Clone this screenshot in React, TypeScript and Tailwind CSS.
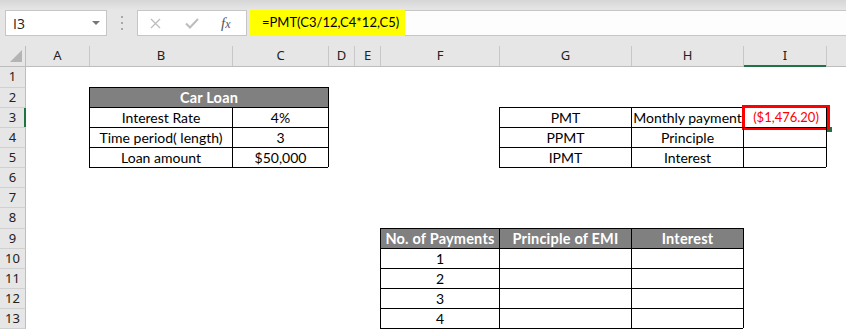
import React from "react";

type Spec = { text?: string; head?: boolean; red?: boolean; span?: number };

const COLS = [
  { k: "A", w: 63 },
  { k: "B", w: 143 },
  { k: "C", w: 96 },
  { k: "D", w: 26 },
  { k: "E", w: 26 },
  { k: "F", w: 119 },
  { k: "G", w: 132 },
  { k: "H", w: 112 },
  { k: "I", w: 83 },
  { k: "J", w: 20 },
];

// row number -> height (px, line included)
const ROWS: [number, number][] = [
  [1, 20], [2, 20], [3, 20], [4, 20], [5, 20], [6, 20], [7, 20],
  [8, 21], [9, 20], [10, 20], [11, 20], [12, 20], [13, 20], [14, 1],
];

// bordered ranges: rows [from, to], columns [from, to] by index
const BOXES = [
  { r: [2, 5], c: [1, 2] },
  { r: [3, 5], c: [6, 8] },
  { r: [9, 13], c: [5, 7] },
];

const CELLS: Record<string, Spec> = {
  B2: { text: "Car Loan", head: true, span: 2 },
  B3: { text: "Interest Rate" },
  C3: { text: "4%" },
  B4: { text: "Time period( length)" },
  C4: { text: "3" },
  B5: { text: "Loan amount" },
  C5: { text: "$50,000" },
  G3: { text: "PMT" },
  H3: { text: "Monthly payment" },
  I3: { text: "($1,476.20)", red: true },
  G4: { text: "PPMT" },
  H4: { text: "Principle" },
  G5: { text: "IPMT" },
  H5: { text: "Interest" },
  F9: { text: "No. of Payments", head: true },
  G9: { text: "Principle of EMI", head: true },
  H9: { text: "Interest", head: true },
  F10: { text: "1" },
  F11: { text: "2" },
  F12: { text: "3" },
  F13: { text: "4" },
};

function inBox(r: number, c: number) {
  return BOXES.some(b => r >= b.r[0] && r <= b.r[1] && c >= b.c[0] && c <= b.c[1]);
}

function FormulaIcons() {
  return (
    <div className="ml-[14px] flex h-[26px] w-[110px] items-center border border-[#c6c6c6] bg-white">
      <svg className="ml-[12px] h-[11px] w-[11px]" viewBox="0 0 11 11" fill="none" stroke="#bdbdbd" strokeWidth={1.3}>
        <path d="M1 1l9 9M10 1l-9 9" />
      </svg>
      <svg className="ml-[24px] h-[11px] w-[14px]" viewBox="0 0 14 11" fill="none" stroke="#bdbdbd" strokeWidth={2}>
        <path d="M1 5.5l4 4L13 1" />
      </svg>
      <span className="ml-[22px] font-['Liberation_Serif',serif] text-[15px] italic leading-none text-[#555]">
        f<span className="text-[12px]">x</span>
      </span>
    </div>
  );
}

function TopBar() {
  return (
    <div className="h-[46px] bg-[#e6e6e6]">
      <div className="h-[10px] bg-gradient-to-b from-[#d6d6d6] to-[#e6e6e6]" />
      <div className="flex h-[26px] items-center">
        <div className="ml-[5px] flex h-[26px] w-[102px] items-center justify-between border border-[#c6c6c6] bg-white pl-[7px] pr-[6px]">
          <span className="font-['Open_Sans',sans-serif] text-[14px] text-[#222]">I3</span>
          <span className="h-0 w-0 border-x-[4px] border-t-[4px] border-x-transparent border-t-[#777]" />
        </div>
        <div className="ml-[14px] flex h-[14px] flex-col justify-between">
          <span className="h-[2px] w-[2px] bg-[#a8a8a8]" />
          <span className="h-[2px] w-[2px] bg-[#a8a8a8]" />
          <span className="h-[2px] w-[2px] bg-[#a8a8a8]" />
        </div>
        <FormulaIcons />
        <div className="ml-[3px] flex h-[26px] flex-1 border-y border-[#c6c6c6] bg-[#fdfdfd]">
          <div className="-my-px flex h-[26px] w-[155px] items-center whitespace-nowrap bg-[#ffff00] pl-[12px] font-['Lato',sans-serif] text-[13px] text-black">
            =PMT(C3/12,C4*12,C5)
          </div>
        </div>
      </div>
    </div>
  );
}

function ColumnHeader() {
  return (
    <div className="flex h-[21px] border-b border-[#bdbdbd] bg-[#e6e6e6] font-['Noto_Sans',sans-serif] text-[13px] text-[#222]">
      <div className="relative w-[26px] border-r border-[#bdbdbd]">
        <div className="absolute left-[10px] top-[4px] h-0 w-0 border-b-[12px] border-l-[12px] border-b-[#b4b4b4] border-l-transparent" />
      </div>
      {COLS.map((c, i) => (
        <div
          key={c.k}
          style={{ width: c.w }}
          className={`relative flex items-center justify-center ${i > 0 ? "border-l border-[#c8c8c8]" : ""}`}
        >
          {c.k === "J" ? "" : c.k}
          {c.k === "I" && <div className="absolute -bottom-px left-0 right-0 h-[2px] bg-[#217346]" />}
        </div>
      ))}
    </div>
  );
}

function Row({ n, h }: { n: number; h: number }) {
  const cells: React.ReactNode[] = [];
  for (let ci = 0; ci < COLS.length; ci++) {
    const col = COLS[ci];
    const spec = CELLS[col.k + n] ?? {};
    let w = col.w;
    if (spec.span) for (let s = 1; s < spec.span; s++) w += COLS[ci + s].w;
    const l = inBox(n, ci) || inBox(n, ci - 1);
    const t = inBox(n, ci) || inBox(n - 1, ci);
    const tone = spec.head
      ? "bg-[#808080] font-bold text-white text-[14.5px] tracking-[0.2px]"
      : spec.red
        ? "text-[#ff0000] text-[13px] pl-[2px]"
        : "text-black";
    const cls = [
      "relative flex items-center justify-center whitespace-nowrap border-black",
      l ? "border-l" : "",
      t ? "border-t" : "",
      tone,
    ].join(" ");
    cells.push(
      <div key={col.k} style={{ width: w }} className={cls}>
        {spec.text}
        {spec.red && (
          <>
            <div className="absolute left-[83px] top-[19px] h-[5px] w-[5px] bg-[#217346]" />
            <div className="absolute -left-[2px] -top-[3px] h-[25px] w-[88px] border-[3px] border-[#ff0000]" />
          </>
        )}
      </div>
    );
    if (spec.span) ci += spec.span - 1;
  }
  return (
    <div className="flex" style={{ height: h }}>
      <div
        className={`relative flex w-[26px] shrink-0 items-center justify-center border-r border-t border-r-[#bdbdbd] border-t-[#d0d0d0] bg-[#e6e6e6] font-['Noto_Sans',sans-serif] text-[13px] text-[#222] ${n === 1 ? "border-t-0" : ""}`}
      >
        {n < 14 ? n : ""}
        {n === 3 && <div className="absolute -right-px top-0 bottom-0 w-[2px] bg-[#217346]" />}
      </div>
      {cells}
    </div>
  );
}

export default function App() {
  return (
    <div className="h-[329px] w-[846px] overflow-hidden bg-white font-['Lato',sans-serif] text-[14px]">
      <TopBar />
      <ColumnHeader />
      {ROWS.map(([n, h]) => (
        <Row key={n} n={n} h={h} />
      ))}
    </div>
  );
}
